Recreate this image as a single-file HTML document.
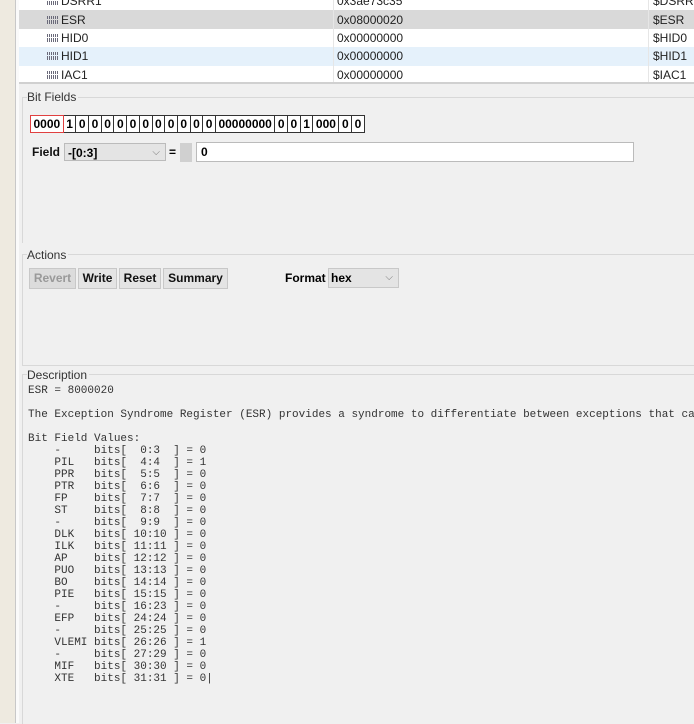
<!DOCTYPE html>
<html><head><style>
body{margin:0;width:694px;height:723px;overflow:hidden;background:#f0f0f0;font-family:"Liberation Sans",sans-serif;position:relative}
.abs{position:absolute}
.row{position:absolute;left:19px;width:675px;height:18px;font-size:12px;color:#222;background:#fff}
.row span{position:absolute;top:2px}
.ic{position:absolute;left:28px;top:5px;width:11px;height:8px;background:repeating-linear-gradient(90deg,#6a6a7a 0 1px,transparent 1px 2px);-webkit-mask:linear-gradient(#000 0 3px,transparent 3px 4px,#000 4px 8px)}
.bits{position:absolute;left:31px;top:115px;display:flex;font:bold 12px "Liberation Sans",sans-serif}
.bits span{border:1px solid #333;padding:1px 2.5px 0;height:15px;line-height:15px;margin-left:-1px;background:#fff}
.grp{position:absolute;border-top:1px solid #d8d8d8;border-left:1px solid #d8d8d8}
.lbl{position:absolute;font-size:12px;color:#333;background:#f0f0f0;padding-right:2px}
.btn{position:absolute;top:268px;height:19px;border:1px solid #c8c8c8;background:#e4e4e4;font:bold 12px "Liberation Sans",sans-serif;line-height:19px;text-align:center;color:#111}
pre{position:absolute;left:28px;top:385px;margin:0;font:11px/12px "Liberation Mono",monospace;color:#333}
</style></head><body>
<div class="abs" style="left:0;top:0;width:15px;height:723px;background:#eeeae0"></div>
<div class="abs" style="left:15px;top:0;width:1px;height:723px;background:#c8c8c8"></div>
<div class="abs" style="left:16px;top:0;width:3px;height:723px;background:#fafafa"></div>

<div class="row" style="top:-8px"><i class="ic"></i><span style="left:42px">DSRR1</span><span style="left:318px">0x3ae73c35</span><span style="left:634px">$DSRR1</span></div>
<div class="row" style="top:10px;height:19px;background:#d9d9d9"><i class="ic" style="top:6px"></i><span style="left:42px;top:3px">ESR</span><span style="left:318px;top:3px">0x08000020</span><span style="left:634px;top:3px">$ESR</span></div>
<div class="row" style="top:29px"><i class="ic"></i><span style="left:42px">HID0</span><span style="left:318px">0x00000000</span><span style="left:634px">$HID0</span></div>
<div class="row" style="top:47px;height:19px;background:#e5f1fb"><i class="ic"></i><span style="left:42px">HID1</span><span style="left:318px">0x00000000</span><span style="left:634px">$HID1</span></div>
<div class="row" style="top:66px;height:16px"><i class="ic"></i><span style="left:42px">IAC1</span><span style="left:318px">0x00000000</span><span style="left:634px">$IAC1</span></div>
<div class="abs" style="left:333px;top:0;width:1px;height:82px;background:#e6e6e6"></div>
<div class="abs" style="left:648px;top:0;width:1px;height:82px;background:#e6e6e6"></div>
<div class="abs" style="left:19px;top:82px;width:675px;height:2px;background:#d0d0d0"></div>

<div class="grp" style="left:22px;top:97px;width:672px;height:145px"></div>
<div class="lbl" style="left:27px;top:90px">Bit Fields</div>
<div class="bits"><span style="border-color:#e04040;position:relative;z-index:1">0000</span><span>1</span><span>0</span><span>0</span><span>0</span><span>0</span><span>0</span><span>0</span><span>0</span><span>0</span><span>0</span><span>0</span><span>0</span><span>00000000</span><span>0</span><span>0</span><span>1</span><span>000</span><span>0</span><span>0</span></div>
<div class="abs" style="left:32px;top:145px;font:bold 12px 'Liberation Sans';color:#111">Field</div>
<div class="abs" style="left:64px;top:143px;height:18px;border:1px solid #bbb;background:#e4e4e4;font:bold 12px 'Liberation Sans';line-height:18px;padding-left:3px;box-sizing:border-box;width:102px">-[0:3]<span style="position:absolute;right:5px;font-weight:normal;color:#777;font-size:10px">⌵</span></div>
<div class="abs" style="left:169px;top:145px;font:bold 12px 'Liberation Sans'">=</div>
<div class="abs" style="left:180px;top:143px;width:12px;height:19px;background:#d0d0d0"></div>
<div class="abs" style="left:196px;top:142px;width:438px;height:20px;border:1px solid #bbb;background:#fff;box-sizing:border-box;font:bold 12px 'Liberation Sans';line-height:18px;padding-left:4px">0</div>

<div class="grp" style="left:22px;top:254px;width:672px;height:110px;border-bottom:1px solid #d8d8d8"></div>
<div class="lbl" style="left:27px;top:248px">Actions</div>
<div class="btn" style="left:29px;width:45px;color:#999;background:#dcdcdc">Revert</div>
<div class="btn" style="left:78px;width:37px">Write</div>
<div class="btn" style="left:119px;width:40px">Reset</div>
<div class="btn" style="left:163px;width:63px">Summary</div>
<div class="abs" style="left:285px;top:271px;font:bold 12px 'Liberation Sans'">Format</div>
<div class="abs" style="left:328px;top:268px;width:71px;height:20px;border:1px solid #c8c8c8;background:#e4e4e4;box-sizing:border-box;font:bold 12px 'Liberation Sans';line-height:18px;padding-left:2px">hex<span style="position:absolute;right:5px;font-weight:normal;color:#777;font-size:10px">⌵</span></div>

<div class="grp" style="left:22px;top:374px;width:672px;height:349px"></div>
<div class="lbl" style="left:27px;top:368px">Description</div>
<pre>ESR = 8000020

The Exception Syndrome Register (ESR) provides a syndrome to differentiate between exceptions that can

Bit Field Values:
    -     bits[  0:3  ] = 0
    PIL   bits[  4:4  ] = 1
    PPR   bits[  5:5  ] = 0
    PTR   bits[  6:6  ] = 0
    FP    bits[  7:7  ] = 0
    ST    bits[  8:8  ] = 0
    -     bits[  9:9  ] = 0
    DLK   bits[ 10:10 ] = 0
    ILK   bits[ 11:11 ] = 0
    AP    bits[ 12:12 ] = 0
    PUO   bits[ 13:13 ] = 0
    BO    bits[ 14:14 ] = 0
    PIE   bits[ 15:15 ] = 0
    -     bits[ 16:23 ] = 0
    EFP   bits[ 24:24 ] = 0
    -     bits[ 25:25 ] = 0
    VLEMI bits[ 26:26 ] = 1
    -     bits[ 27:29 ] = 0
    MIF   bits[ 30:30 ] = 0
    XTE   bits[ 31:31 ] = 0|</pre>
</body></html>
